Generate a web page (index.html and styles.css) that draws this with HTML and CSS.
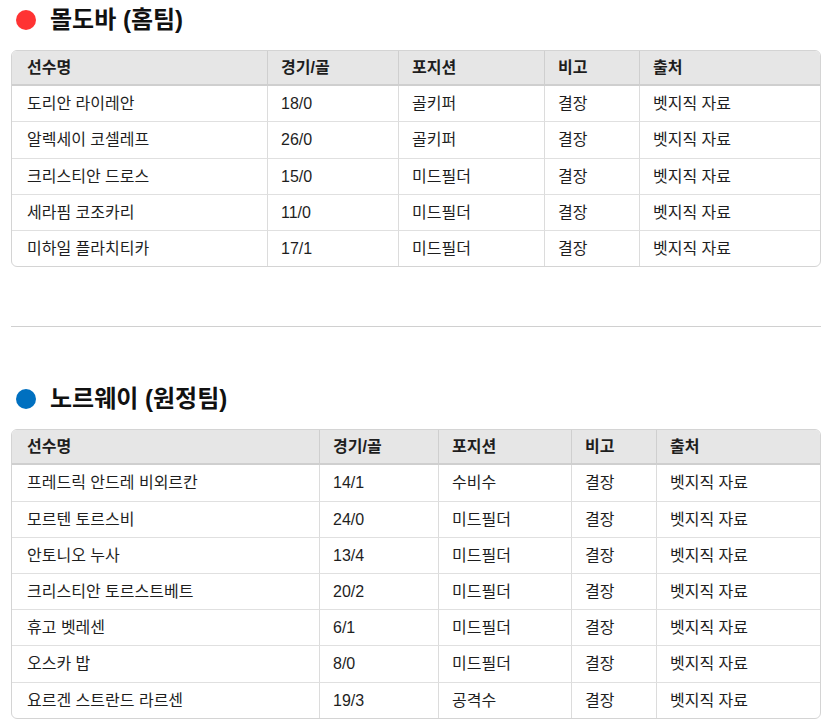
FILE: index.html
```html
<!DOCTYPE html>
<html lang="ko">
<head>
<meta charset="utf-8">
<title>선수 명단</title>
<link rel="stylesheet" href="styles.css">
</head>
<body>
<section class="team">
  <h2 class="team-title"><span class="dot dot-red"></span>몰도바 (홈팀)</h2>
  <table class="roster roster-home">
    <colgroup>
      <col class="c-name"><col class="c-games"><col class="c-pos"><col class="c-note"><col>
    </colgroup>
    <thead>
      <tr><th>선수명</th><th>경기/골</th><th>포지션</th><th>비고</th><th>출처</th></tr>
    </thead>
    <tbody>
      <tr><td>도리안 라이레안</td><td>18/0</td><td>골키퍼</td><td>결장</td><td>벳지직 자료</td></tr>
      <tr><td>알렉세이 코셀레프</td><td>26/0</td><td>골키퍼</td><td>결장</td><td>벳지직 자료</td></tr>
      <tr><td>크리스티안 드로스</td><td>15/0</td><td>미드필더</td><td>결장</td><td>벳지직 자료</td></tr>
      <tr><td>세라핌 코조카리</td><td>11/0</td><td>미드필더</td><td>결장</td><td>벳지직 자료</td></tr>
      <tr><td>미하일 플라치티카</td><td>17/1</td><td>미드필더</td><td>결장</td><td>벳지직 자료</td></tr>
    </tbody>
  </table>
</section>
<hr class="divider">
<section class="team">
  <h2 class="team-title"><span class="dot dot-blue"></span>노르웨이 (원정팀)</h2>
  <table class="roster roster-away">
    <colgroup>
      <col class="c-name"><col class="c-games"><col class="c-pos"><col class="c-note"><col>
    </colgroup>
    <thead>
      <tr><th>선수명</th><th>경기/골</th><th>포지션</th><th>비고</th><th>출처</th></tr>
    </thead>
    <tbody>
      <tr><td>프레드릭 안드레 비외르칸</td><td>14/1</td><td>수비수</td><td>결장</td><td>벳지직 자료</td></tr>
      <tr><td>모르텐 토르스비</td><td>24/0</td><td>미드필더</td><td>결장</td><td>벳지직 자료</td></tr>
      <tr><td>안토니오 누사</td><td>13/4</td><td>미드필더</td><td>결장</td><td>벳지직 자료</td></tr>
      <tr><td>크리스티안 토르스트베트</td><td>20/2</td><td>미드필더</td><td>결장</td><td>벳지직 자료</td></tr>
      <tr><td>휴고 벳레센</td><td>6/1</td><td>미드필더</td><td>결장</td><td>벳지직 자료</td></tr>
      <tr><td>오스카 밥</td><td>8/0</td><td>미드필더</td><td>결장</td><td>벳지직 자료</td></tr>
      <tr><td>요르겐 스트란드 라르센</td><td>19/3</td><td>공격수</td><td>결장</td><td>벳지직 자료</td></tr>
    </tbody>
  </table>
</section>
</body>
</html>
```
FILE: styles.css
```css
html, body {
  margin: 0;
  padding: 0;
  background: #ffffff;
}
body {
  padding: 0 11px;
  font-family: "Liberation Sans", "Noto Sans CJK KR", sans-serif;
  color: #1e1e1e;
  font-size: 16px;
}
.team-title {
  display: flex;
  align-items: center;
  gap: 14px;
  margin: 5px 0 15px 0;
  height: 30px;
  line-height: 30px;
  font-size: 24px;
  font-weight: bold;
  color: #111111;
}
.dot {
  width: 20px;
  height: 20px;
  border-radius: 50%;
  margin-left: 5px;
  flex: none;
}
.dot-red { background: #ff3333; }
.dot-blue { background: #0070c0; }

.roster {
  width: 810px;
  table-layout: fixed;
  border-collapse: separate;
  border-spacing: 0;
  border: 1px solid #d4d4d4;
  border-radius: 6px;
  overflow: hidden;
}
.roster th,
.roster td {
  text-align: left;
  padding: 7px 15px 7px 13px;
  line-height: 21.2px;
  border-left: 1px solid #dcdcdc;
  white-space: nowrap;
}
.roster th:first-child,
.roster td:first-child {
  border-left: none;
  padding-left: 15px;
}
.roster th {
  background: #e6e6e6;
  font-weight: bold;
  padding-top: 6px;
  padding-bottom: 6px;
  border-bottom: 2px solid #cfcfcf;
  border-left-color: #cfcfcf;
}
.roster td {
  border-bottom: 1px solid #e0e0e0;
}
.roster tbody tr:last-child td {
  border-bottom: none;
}

.roster-home .c-name { width: 255px; }
.roster-home .c-games { width: 131px; }
.roster-home .c-pos { width: 146px; }
.roster-home .c-note { width: 95px; }

.roster-away .c-name { width: 307px; }
.roster-away .c-games { width: 119px; }
.roster-away .c-pos { width: 133px; }
.roster-away .c-note { width: 85px; }

.divider {
  border: none;
  border-top: 1px solid #d0d0d0;
  height: 0;
  margin: 59px 0 57px 0;
}
```
